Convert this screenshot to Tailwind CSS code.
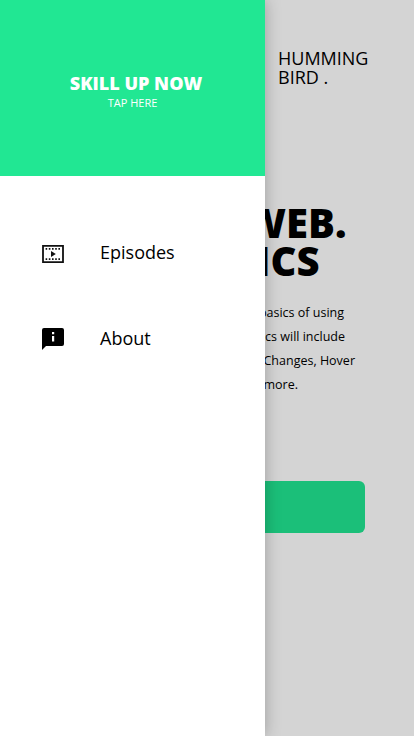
<!DOCTYPE html>
<html lang="en">
<head>
<meta charset="utf-8">
<title>Humming Bird</title>
<script src="https://cdn.jsdelivr.net/npm/@tailwindcss/browser@4"></script>
</head>
<body class="relative h-[736px] w-[414px] overflow-hidden bg-[#d4d4d4] font-['Open_Sans',sans-serif] text-black">
<main class="flex h-full flex-col">
  <div class="pl-[278px] pt-[49px] text-[18px] leading-[19px]">HUMMING<br>BIRD .</div>
  <h1 class="mt-[117px] text-right text-[40px] font-extrabold leading-[38px] whitespace-nowrap">
    <span class="block pr-[67.5px]">WEB.</span>
    <span class="block pr-[94.5px]">BASICS</span>
  </h1>
  <div class="mt-[21px] text-right text-[12.5px] leading-6 whitespace-nowrap">
    <p class="pr-[70px]">the basics of using</p>
    <p class="pr-[69px]">Topics will include</p>
    <p class="pr-[59px]">Changes, Hover</p>
    <p class="pr-[116px]">and more.</p>
  </div>
  <div class="mt-[83.5px] ml-[49px] h-[52px] w-[316px] rounded-[6px] bg-[#1bbf79]"></div>
</main>
<aside class="absolute inset-y-0 left-0 w-[265px] bg-white shadow-[0_0_15px_rgba(0,0,0,0.26)]">
  <header class="flex h-[176px] flex-col items-center bg-[#21e793] pt-[71px] text-white">
    <div class="pl-[7px] text-[18px] font-extrabold leading-[24px]">SKILL UP NOW</div>
    <div class="text-[11px] leading-[15px]">TAP HERE</div>
  </header>
  <nav class="flex flex-col pt-[63px] pl-[41px] text-[18px] leading-[26px]">
    <a class="flex h-[26px] items-center">
      <svg class="mt-[4px] h-6 w-6" viewBox="0 0 24 24" fill="none">
        <path d="M2 3.8h20v16.4H2z" stroke="#111" stroke-width="1.8"/>
        <path d="M4.6 6.9h15M4.6 17.1h15" stroke="#111" stroke-width="1.7" stroke-dasharray="1.6 1.6"/>
        <path d="M10 9v6L14.8 12z" fill="#111"/>
      </svg>
      <span class="ml-[35px]">Episodes</span>
    </a>
    <a class="mt-[60px] flex h-[26px] items-center">
      <svg class="h-6 w-6" viewBox="0 0 24 24">
        <path d="M21 2H3a2 2 0 0 0-2 2v20l4-4h16a2 2 0 0 0 2-2V4a2 2 0 0 0-2-2z"/>
        <path d="M11 6h2.2v2.2H11zM11 10h2.2v5.4H11z" fill="#fff"/>
      </svg>
      <span class="ml-[35px]">About</span>
    </a>
  </nav>
</aside>
</body>
</html>
